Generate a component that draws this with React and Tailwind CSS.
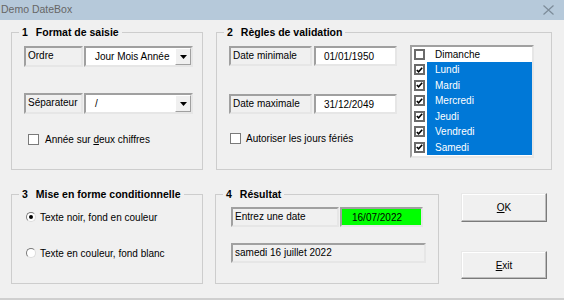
import React from 'react';

const sunken = 'border-2 border-t-[#a0a0a0] border-l-[#a0a0a0] border-r-[#e6e6e6] border-b-[#e6e6e6]';

function Frame({ num, title, className, children }) {
  return (
    <fieldset className={`m-0 p-0 min-w-0 border border-[#cdcdcd] ${className}`}>
      <legend className="ml-[7px] px-[3px] h-[13px] leading-[13px] text-[10.5px] font-bold text-black whitespace-nowrap">
        <span>{num}</span>
        <span className="ml-[8px]">{title}</span>
      </legend>
      {children}
    </fieldset>
  );
}

function Label({ children, className }) {
  return (
    <div className={`${sunken} bg-[#f0f0f0] pl-[2px] pt-[1px] leading-[13px] ${className}`}>
      {children}
    </div>
  );
}

function Combo({ value }) {
  return (
    <div className={`${sunken} ml-[1px] w-[109px] h-full bg-white flex items-center`}>
      <span className="flex-1 pl-[9px]">{value}</span>
      <div className="w-[16px] h-full bg-[#f0f0f0] border border-t-white border-l-white border-r-[#a0a0a0] border-b-[#a0a0a0] flex items-center justify-center">
        <svg width="7" height="4" viewBox="0 0 7 4">
          <path d="M0 0h7L3.5 4z" fill="#000" />
        </svg>
      </div>
    </div>
  );
}

function Check({ checked, thick }) {
  return (
    <div
      className={`w-[11px] h-[11px] bg-white flex items-center justify-center shrink-0 ${
        thick ? 'border-2 border-[#6b6b6b]' : 'border border-[#7a7a7a]'
      }`}
    >
      {checked && (
        <svg width="7" height="6" viewBox="0 0 7 6">
          <path d="M0.8 3L2.6 4.8L6.2 0.8" fill="none" stroke="#000" strokeWidth="1.6" />
        </svg>
      )}
    </div>
  );
}

function Radio({ checked }) {
  return (
    <div className="w-[10px] h-[10px] rounded-full bg-white border border-t-[#7a7a7a] border-l-[#7a7a7a] border-r-[#dcdcdc] border-b-[#dcdcdc] flex items-center justify-center shrink-0">
      {checked && <div className="w-[4px] h-[4px] rounded-full bg-black" />}
    </div>
  );
}

function Button({ children, className }) {
  return (
    <div className={`w-[86px] bg-[#f0f0f0] border border-t-[#e8e8e8] border-l-[#e8e8e8] border-r-[#7a7a7a] border-b-[#7a7a7a] shadow-[inset_-1px_-1px_0_#bdbdbd,inset_1px_1px_0_#ffffff] flex items-center justify-center ${className}`}>
      {children}
    </div>
  );
}

const days = ['Dimanche', 'Lundi', 'Mardi', 'Mercredi', 'Jeudi', 'Vendredi', 'Samedi'];

export default function App() {
  return (
    <div className="w-[564px] h-[300px] bg-[#f0f0f0] flex flex-col overflow-hidden font-['Liberation_Sans',Arial,sans-serif] text-[10px] text-black">
      {/* Title bar */}
      <div className="h-[20px] shrink-0 bg-[#b6c9da] flex items-center justify-between">
        <span className="pl-[1px] text-[10.5px] text-[#666]">Demo DateBox</span>
        <svg width="11" height="10" viewBox="0 0 11 10" className="mr-[10px]">
          <path d="M0.5 0.5L10.5 9.5M10.5 0.5L0.5 9.5" stroke="#7d8c99" strokeWidth="1.2" />
        </svg>
      </div>

      <div className="flex-1 pl-[11px]">
        {/* Row 1 */}
        <div className="flex mt-[6px]">
          <Frame num="1" title="Format de saisie" className="w-[192px] h-[144px]">
            <div className="pl-[12px] pt-[7px]">
              <div className="flex h-[21px]">
                <Label className="w-[59px]">Ordre</Label>
                <Combo value="Jour Mois Année" />
              </div>
              <div className="flex h-[21px] mt-[26px]">
                <Label className="w-[59px]">Séparateur</Label>
                <Combo value="/" />
              </div>
              <div className="flex items-center h-[13px] mt-[19px] ml-[4px]">
                <Check />
                <span className="ml-[6px]">
                  Année sur <span className="underline">d</span>eux chiffres
                </span>
              </div>
            </div>
          </Frame>

          <Frame num="2" title="Règles de validation" className="ml-[13px] w-[336px] h-[144px]">
            <div className="flex pl-[12px] pt-[6px]">
              <div className="w-[168px] pt-[1px]">
                <div className="flex h-[20px]">
                  <Label className="w-[83px]">Date minimale</Label>
                  <div className={`${sunken} ml-[2px] w-[83px] bg-white flex items-center pl-[8px]`}>01/01/1950</div>
                </div>
                <div className="flex h-[20px] mt-[28px]">
                  <Label className="w-[83px]">Date maximale</Label>
                  <div className={`${sunken} ml-[2px] w-[83px] bg-white flex items-center pl-[8px]`}>31/12/2049</div>
                </div>
                <div className="flex items-center h-[13px] mt-[18px] ml-[1px]">
                  <Check />
                  <span className="ml-[5px]">Autoriser les jours fériés</span>
                </div>
              </div>
              <div className={`${sunken} ml-[13px] w-[124px] h-[113px] shrink-0 bg-white`}>
                {days.map((d, i) => (
                  <div key={d} className={`flex items-center ${i === 0 ? 'h-[15px]' : 'h-[15.5px]'}`}>
                    <div className="w-[14px] pl-[2px] flex items-center">
                      <Check checked={i > 0} thick />
                    </div>
                    <div className={`flex-1 h-full flex items-center pl-[8px] ml-[1px] ${i > 0 ? 'bg-[#0078d7] text-white' : ''}`}>
                      {d}
                    </div>
                  </div>
                ))}
              </div>
            </div>
          </Frame>
        </div>

        {/* Row 2 */}
        <div className="flex mt-[18px]">
          <Frame num="3" title="Mise en forme conditionnelle" className="w-[192px] h-[96px]">
            <div className="pl-[14px] pt-[9px]">
              <div className="flex items-center h-[14px]">
                <Radio checked />
                <span className="ml-[4px]">Texte noir, fond en couleur</span>
              </div>
              <div className="flex items-center h-[14px] mt-[22px]">
                <Radio />
                <span className="ml-[4px]">Texte en couleur, fond blanc</span>
              </div>
            </div>
          </Frame>

          <Frame num="4" title="Résultat" className="ml-[12px] w-[224px] h-[96px]">
            <div className="pl-[15px] pt-[6px]">
              <div className="flex h-[20px]">
                <Label className="w-[108px]">Entrez une date</Label>
                <div className={`${sunken} ml-[1px] w-[83px] bg-[#00ff00] flex items-center pl-[10px]`}>16/07/2022</div>
              </div>
              <Label className="w-[195px] h-[20px] mt-[16px]">samedi 16 juillet 2022</Label>
            </div>
          </Frame>

          <div className="ml-[22px] pt-[5px] flex flex-col">
            <Button className="h-[29px]">
              <span>
                <span className="underline">O</span>K
              </span>
            </Button>
            <Button className="h-[28px] mt-[29px]">
              <span>
                <span className="underline">E</span>xit
              </span>
            </Button>
          </div>
        </div>
      </div>
      <div className="h-[2px] shrink-0 bg-[#cfcfcf]" />
    </div>
  );
}
